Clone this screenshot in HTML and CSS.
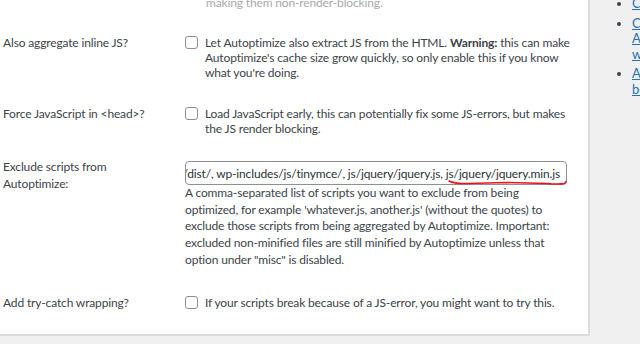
FILE: index.html
```html
<!DOCTYPE html>
<html>
<head>
<meta charset="utf-8">
<link rel="stylesheet" href="styles.css">
</head>
<body>
<div class="page">
  <div class="panel">
    <p class="fragment">making them non-render-blocking.</p>

    <div class="row row-inline">
      <div class="label">Also aggregate inline JS?</div>
      <div class="field">
        <label class="check"><span class="box"></span><span class="text">Let Autoptimize also extract JS from the HTML. <b>Warning:</b> this can make Autoptimize's cache size grow quickly, so only enable this if you know what you're doing.</span></label>
      </div>
    </div>

    <div class="row row-force">
      <div class="label">Force JavaScript in &lt;head&gt;?</div>
      <div class="field">
        <label class="check"><span class="box"></span><span class="text">Load JavaScript early, this can potentially fix some JS-errors, but makes the JS render blocking.</span></label>
      </div>
    </div>

    <div class="row row-exclude">
      <div class="label label-tall">Exclude scripts from Autoptimize:</div>
      <div class="field">
        <div class="input"><span class="value">wp-includes/js/dist/, wp-includes/js/tinymce/, js/jquery/jquery.js, js/jquery/jquery.min.js</span></div>
        <p class="desc">A comma-separated list of scripts you want to exclude from being optimized, for example 'whatever.js, another.js' (without the quotes) to exclude those scripts from being aggregated by Autoptimize. Important: excluded non-minified files are still minified by Autoptimize unless that option under "misc" is disabled.</p>
      </div>
    </div>

    <div class="row row-try">
      <div class="label">Add try-catch wrapping?</div>
      <div class="field">
        <label class="check"><span class="box"></span><span class="text">If your scripts break because of a JS-error, you might want to try this.</span></label>
      </div>
    </div>

    <svg class="scribble" width="130" height="12" viewBox="0 0 130 12">
      <path d="M2 3 Q8 6 20 5.5 L60 4.5 L100 5.5 Q112 6.5 117 5.5 Q119 5 119 3.5" fill="none" stroke="#e8141b" stroke-width="1.6" stroke-linecap="round"/>
    </svg>
  </div>

  <ul class="side">
    <li><a href="#">Critical</a></li>
    <li><a href="#">Cache Autoptimize wordt</a></li>
    <li><a href="#">Autoptimize beta</a></li>
  </ul>
</div>
</body>
</html>
```
FILE: styles.css
```css
html, body {
  margin: 0;
  padding: 0;
  overflow: hidden;
}
body {
  background: #f0f0f1;
  font-family: "Lato", "Noto Sans", sans-serif;
  font-size: 12px;
  letter-spacing: -0.15px;
  color: #3c434a;
}
.page {
  display: flex;
  width: 640px;
  height: 344px;
  overflow: hidden;
}
.panel {
  position: relative;
  flex: none;
  box-sizing: border-box;
  width: 590px;
  height: 336px;
  background: #fff;
  border-right: 2px solid #dcdcde;
  border-bottom: 2px solid #dcdcde;
}
.fragment {
  margin: -5px 0 0 206px;
  line-height: 15px;
  color: #a7aaad;
}
.row {
  display: grid;
  grid-template-columns: 185px 1fr;
}
.row-inline { margin-top: 25px; }
.row-force { margin-top: 26px; }
.row-exclude { margin-top: 22px; }
.row-try { margin-top: 26px; }
.label {
  padding-left: 3px;
  line-height: 15px;
}
.label-tall {
  line-height: 17px;
  padding-right: 60px;
}
.field {
  padding-right: 17px;
}
.check {
  display: flex;
  align-items: flex-start;
  line-height: 15px;
}
.box {
  flex: none;
  box-sizing: border-box;
  width: 13px;
  height: 13px;
  margin: 1px 7px 0 0;
  border: 1px solid #8c8f94;
  border-radius: 3px;
  background: #fff;
}
.text b { font-weight: 700; }
.input {
  box-sizing: border-box;
  width: 382px;
  height: 24px;
  margin-top: 3px;
  border: 1px solid #8c8f94;
  border-radius: 4px;
  padding: 0 6px;
  display: flex;
  justify-content: flex-end;
  align-items: center;
  overflow: hidden;
  white-space: nowrap;
  color: #2c3338;
}
.value { flex: none; }
.desc {
  margin: 0;
  line-height: 16.7px;
}
.scribble {
  position: absolute;
  left: 447px;
  top: 178px;
}
.side {
  margin: -4px 0 0;
  padding: 0 0 0 42px;
  width: 8px;
  font-size: 13px;
  line-height: 15.5px;
  color: #3c434a;
}
.side li {
  margin-bottom: 4px;
}
.side a {
  color: #2271b1;
  text-decoration: underline;
}
```
